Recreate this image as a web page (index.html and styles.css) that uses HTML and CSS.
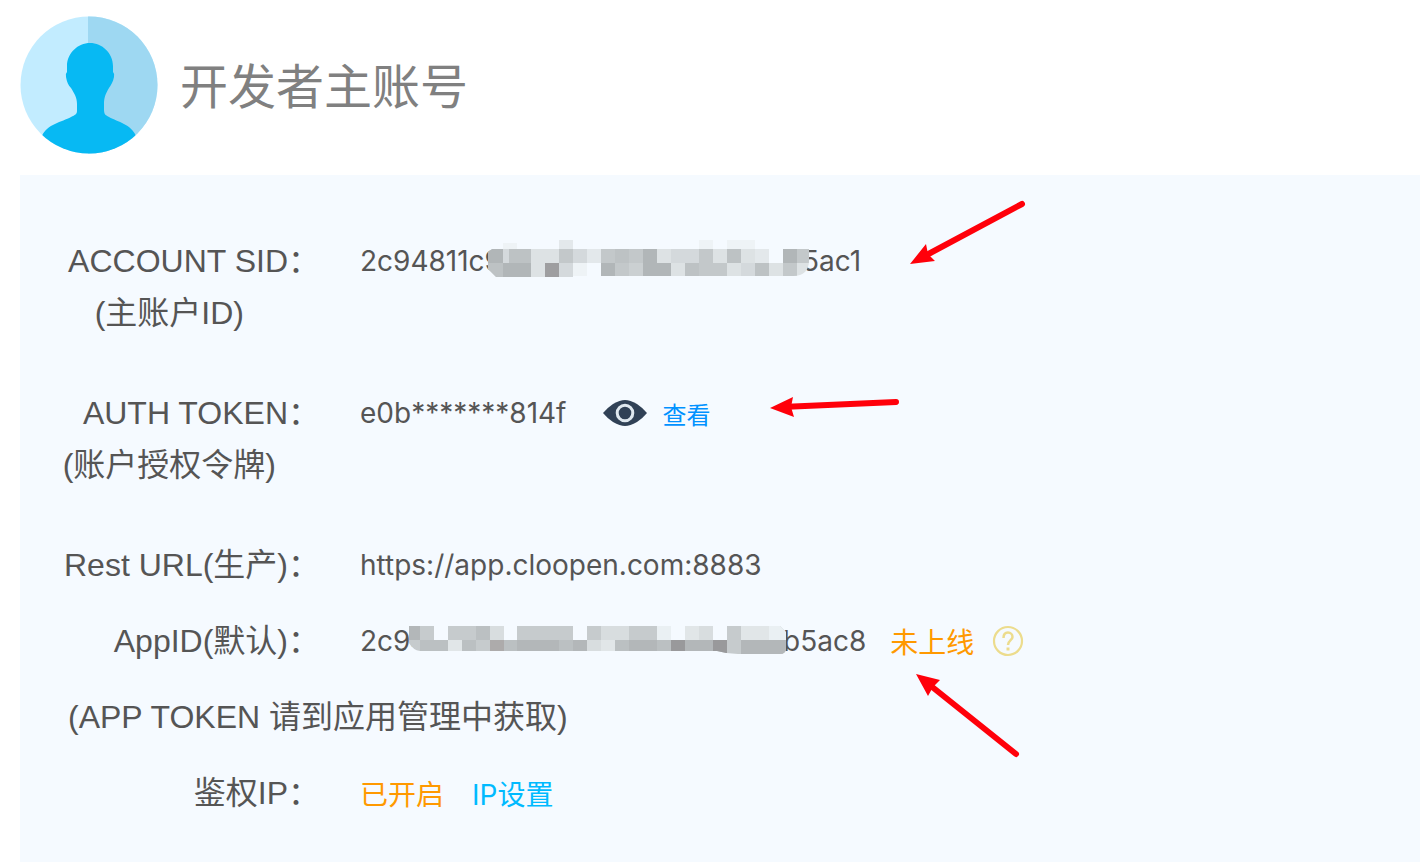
FILE: index.html
```html
<!DOCTYPE html>
<html lang="zh-CN">
<head>
<meta charset="utf-8">
<title>开发者主账号</title>
<link rel="stylesheet" href="styles.css">
</head>
<body>
<header class="header">
  <svg class="avatar" viewBox="0 0 138 138" aria-hidden="true">
    <defs><clipPath id="disc"><circle cx="69" cy="69" r="68.5"/></clipPath></defs>
    <g clip-path="url(#disc)">
      <rect width="138" height="138" fill="#c2ecff"/>
      <rect x="68" width="70" height="138" fill="#9ed8f2"/>
      <path fill="#07b9f3" d="M70 27C82 27 93 37 93 50V56Q95 58 94 61C93 66 91 69 89 72C86 77 84 81 84 88V93C84 98 85 99 89 101C98 106 111 108 116 120V138H22V120C27 108 42 106 51 101C55 99 57 98 57 95V88C57 81 54 77 51 72C48 69 47 66 46 61Q45 58 47 56V50C47 37 58 27 70 27Z"/>
    </g>
  </svg>
  <h1 class="title">开发者主账号</h1>
</header>
<main class="panel">
  <dl class="fields">
    <div class="row row-tall">
      <dt class="label">ACCOUNT SID：<span class="sub sub-account">(主账户ID)</span></dt>
      <dd class="value">
        <span class="start-sid">2c94811c9</span>
        <svg class="mask mask-sid" viewBox="0 0 321 38" shape-rendering="crispEdges" aria-hidden="true">
          <clipPath id="m1"><path d="M0 12L4 9H15V0H306V9H321V20Q321 36 305 36H85V37H8L0 29Z"/></clipPath>
          <g clip-path="url(#m1)">
            <path fill="#dde2e4" d="M0 9H321V37H0z"/>
            <path fill="#b1b6b8" d="M0 9h15v14H0zM15 23h28v14H15zM113 23h14v14h-14zM155 9h14v28h-14zM169 23h14v14h-14zM295 9h14v14h-14z"/>
            <path fill="#bdc2c4" d="M0 23h15v14H0zM21 9h22v14H21zM127 9h14v14h-14zM197 23h14v14h-14zM239 9h14v14h-14zM267 23h14v14h-14z"/>
            <path fill="#c3c8ca" d="M71 9h14v14H71zM113 9h14v14h-14zM141 9h14v14h-14zM127 23h14v14h-14zM211 9h14v28h-14zM225 23h14v14h-14zM295 23h14v14h-14zM309 9h12v14h-12z"/>
            <path fill="#cbd0d2" d="M141 23h14v14h-14z"/>
            <path fill="#d4d9dc" d="M15 9h6v14h-6zM71 23h14v14H71zM85 9h14v14H85zM183 9h28v14h-28zM253 23h14v14h-14z"/>
            <path fill="#9e9ea0" d="M57 23h14v14H57z"/>
            <path fill="#e3e8eb" d="M71 0h14v9H71zM99 9h14v14H99zM267 9h14v14h-14z"/>
            <path fill="#eef3f6" d="M15 3h14v6H15zM85 23h14v14H85zM211 0h14v9h-14zM239 0h28v9h-28z"/>
            <path fill="#f5faff" d="M99 23h14v14H99zM281 9h14v14h-14z"/>
          </g>
        </svg>
        <span>5ac1</span>
      </dd>
    </div>
    <div class="row row-tall">
      <dt class="label">AUTH TOKEN：<span class="sub sub-auth">(账户授权令牌)</span></dt>
      <dd class="value">
        <span>e0b*******814f</span>
        <button class="view" type="button">
          <svg class="eye" viewBox="0 0 44 28" aria-hidden="true">
            <path fill="#304156" d="M0 14Q4 9 10 5Q17 1 22 1Q27 1 34 5Q40 9 44 14Q40 19 34 23Q27 27 22 27Q17 27 10 23Q4 19 0 14Z"/>
            <circle cx="22" cy="14" r="7.8" fill="#304156" stroke="#dfe8ef" stroke-width="3"/>
          </svg>
          查看
        </button>
      </dd>
    </div>
    <div class="row">
      <dt class="label">Rest URL(生产)：</dt>
      <dd class="value">https://app.cloopen.com:8883</dd>
    </div>
    <div class="row">
      <dt class="label">AppID(默认)：</dt>
      <dd class="value">
        <span class="start-app">2c94</span>
        <svg class="mask mask-app" viewBox="0 0 377 28" shape-rendering="crispEdges" aria-hidden="true">
          <clipPath id="m2"><path d="M0 0H371L377 6V22Q377 28 371 28H329Q318 28 308 25H11Q4 24 0 17Z"/></clipPath>
          <g clip-path="url(#m2)">
            <path fill="#c6cbcd" d="M0 0H377V28H0z"/>
            <path fill="#b3b7b9" d="M0 0h11v14H0zM108 14h42v14h-42zM164 14h14v14h-14zM220 14h28v14h-28zM276 14h28v14h-28zM332 14h45v14h-45z"/>
            <path fill="#bbc0c2" d="M11 14h28v14H11zM53 14h14v14H53zM67 0h14v14H67zM95 14h13v14H95zM150 14h14v14h-14zM206 14h14v14h-14zM248 14h14v14h-14z"/>
            <path fill="#d8dddf" d="M81 0h14v14H81zM178 14h14v14h-14zM192 0h28v14h-28zM290 0h14v14h-14z"/>
            <path fill="#e1e6e8" d="M39 14h14v14H39zM192 14h14v14h-14zM276 0h14v14h-14zM332 0h28v14h-28z"/>
            <path fill="#eaf0f3" d="M248 0h14v14h-14zM360 0h17v14h-17z"/>
            <path fill="#adabab" d="M81 14h14v14H81z"/>
            <path fill="#99999b" d="M262 14h14v14h-14zM304 14h14v14h-14z"/>
            <path fill="#f5faff" d="M25 0h14v14H25zM95 0h13v14H95zM164 0h14v14h-14zM262 0h14v14h-14zM304 0h14v14h-14z"/>
          </g>
        </svg>
        <span>b5ac8</span>
        <span class="status status-offline">未上线</span>
        <button class="help" type="button" aria-label="帮助">
          <svg class="help-icon" viewBox="0 0 32 32" fill="none" stroke="#ecdc8d" stroke-width="2.2" aria-hidden="true">
            <circle cx="16" cy="16" r="14"/>
            <path d="M11.5 13C11.5 9 13.5 7.5 16 7.5S20.500 9.500 20.500 12C20.500 15 16 15.500 16 20" stroke-width="2.500"/>
            <path d="M16 22.500V25.500" stroke-width="3"/>
          </svg>
        </button>
      </dd>
    </div>
    <div class="row">
      <dt class="note">(APP TOKEN 请到应用管理中获取)</dt>
    </div>
    <div class="row">
      <dt class="label">鉴权IP：</dt>
      <dd class="value"><span class="status">已开启</span><a class="settings" href="#">IP设置</a></dd>
    </div>
  </dl>
  <svg class="arrows" viewBox="0 0 260 560" fill="#ff000a" stroke="#ff000a" stroke-linecap="round" aria-hidden="true">
    <path stroke-width="6" d="M252 4L151 58M126 202L12 207M246 554L156 482"/>
    <path stroke="none" d="M140 64L156 44L158 54L165 61ZM0 208L23 197L21 207L24 217ZM146 474L170 480L163 487L158 496Z"/>
  </svg>
</main>
</body>
</html>
```

FILE: styles.css
```css
* {
  box-sizing: border-box;
}

body {
  margin: 0;
  background: #fff;
  color: #555;
  font-family: Inter, "Noto Sans CJK SC", sans-serif;
}

.header {
  display: flex;
  align-items: center;
  gap: 22px;
  padding: 16px 20px 21px;
}

.avatar {
  width: 138px;
  height: 138px;
}

.title {
  margin: 0;
  padding-top: 4px;
  color: #808080;
  font-size: 48px;
  font-weight: 400;
  line-height: 64px;
}

.panel {
  position: relative;
  min-height: calc(100vh - 175px);
  margin-left: 20px;
  padding: 48px 20px 31px;
  background: #f5faff;
}

.fields {
  margin: 0;
}

.row {
  display: flex;
  gap: 40px;
  padding: 12px 0;
}

.row-tall {
  padding-bottom: 36px;
}

.label,
.note {
  font-family: "Liberation Sans", "Noto Sans CJK SC", sans-serif;
  font-size: 32px;
  line-height: 52px;
  white-space: nowrap;
}

.label {
  width: 280px;
  text-align: right;
}

.note {
  padding-left: 28px;
}

.sub {
  display: block;
}

.sub-account {
  padding-right: 76px;
}

.sub-auth {
  padding-right: 44px;
}

.value {
  display: flex;
  align-items: center;
  height: 52px;
  margin: 0;
  font-size: 28px;
  white-space: nowrap;
}

.start-sid {
  width: 128px;
}

.start-app {
  width: 49px;
}

.mask {
  position: relative;
  flex: none;
}

.mask-sid {
  width: 321px;
  height: 38px;
  margin: 0 -7px 4px 0;
}

.mask-app {
  width: 377px;
  height: 28px;
  margin: 0 -3px 2px 0;
}

.view,
.help {
  display: flex;
  align-items: center;
  padding: 0;
  border: 0;
  background: none;
  font: inherit;
  cursor: pointer;
}

.view {
  gap: 16px;
  margin-left: 36px;
  color: #0092ff;
  font-size: 24px;
}

.eye {
  width: 44px;
  height: 28px;
}

.status {
  color: #f90;
}

.status-offline {
  margin-left: 24px;
}

.help {
  margin-left: 18px;
}

.help-icon {
  width: 32px;
  height: 32px;
}

.settings {
  margin-left: 28px;
  color: #00baff;
  text-decoration: none;
}

.arrows {
  position: absolute;
  top: 25px;
  left: 750px;
  width: 260px;
  height: 560px;
  pointer-events: none;
}
```
